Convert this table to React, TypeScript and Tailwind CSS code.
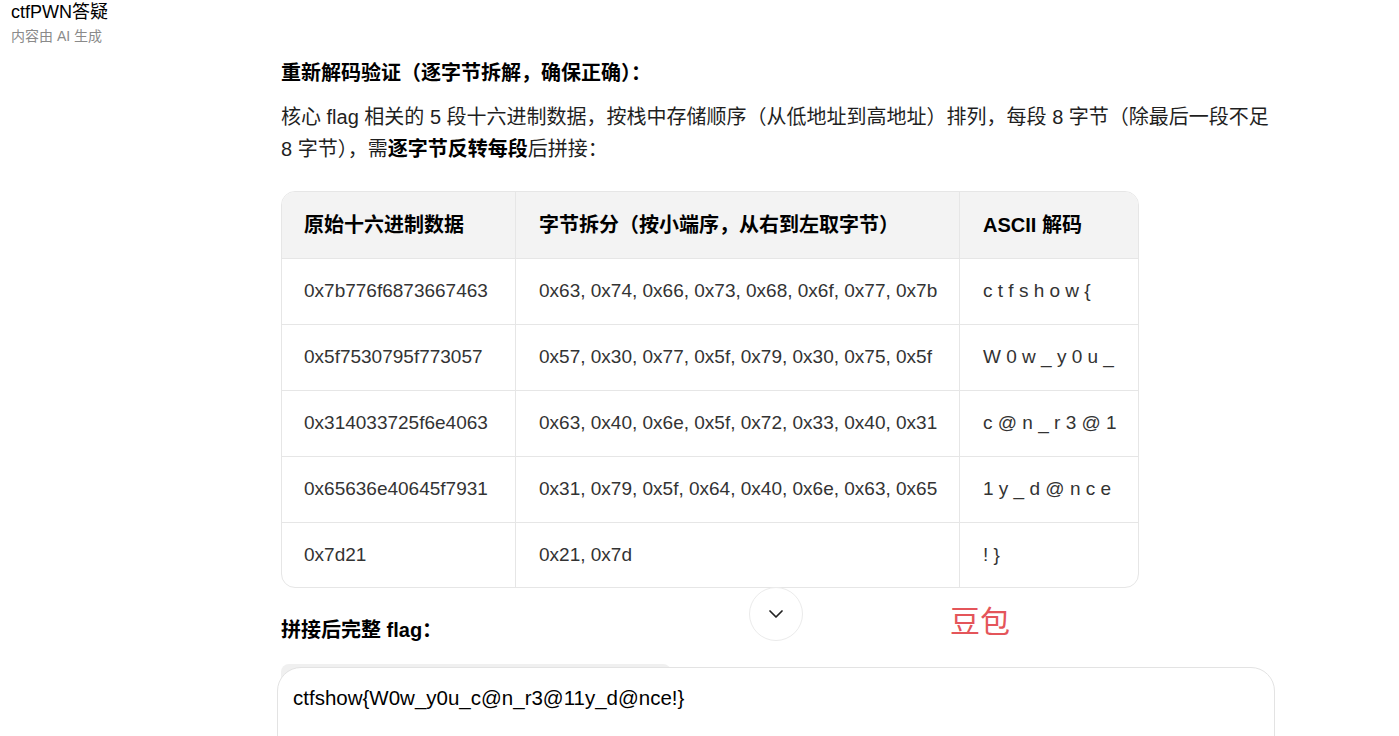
import { ChevronDown } from 'lucide-react'

type Row = {
  hex: string
  bytes: string
  ascii: string
}

const rows: Row[] = [
  { hex: '0x7b776f6873667463', bytes: '0x63, 0x74, 0x66, 0x73, 0x68, 0x6f, 0x77, 0x7b', ascii: 'c t f s h o w {' },
  { hex: '0x5f7530795f773057', bytes: '0x57, 0x30, 0x77, 0x5f, 0x79, 0x30, 0x75, 0x5f', ascii: 'W 0 w _ y 0 u _' },
  { hex: '0x314033725f6e4063', bytes: '0x63, 0x40, 0x6e, 0x5f, 0x72, 0x33, 0x40, 0x31', ascii: 'c @ n _ r 3 @ 1' },
  { hex: '0x65636e40645f7931', bytes: '0x31, 0x79, 0x5f, 0x64, 0x40, 0x6e, 0x63, 0x65', ascii: '1 y _ d @ n c e' },
  { hex: '0x7d21', bytes: '0x21, 0x7d', ascii: '! }' },
]

export default function App() {
  return (
    <div className="relative h-[736px] w-[1399px] overflow-hidden bg-white font-['Liberation_Sans','Noto_Sans_CJK_SC',sans-serif] text-[#1f1f1f]">
      {/* top bar */}
      <header className="px-[11px]">
        <div className="text-[18px] leading-[24px] text-black">ctfPWN答疑</div>
        <div className="mt-[2px] text-[14px] leading-[20px] text-[#8a8a8a]">内容由 AI 生成</div>
      </header>

      {/* message body */}
      <main className="ml-[281px] w-[994px] pt-[13px]">
        <h3 className="text-[20px] font-bold leading-[28px] text-black">
          重新解码验证（逐字节拆解，确保正确）：
        </h3>
        <p className="mt-[14px] text-[20px] leading-[32px]">
          核心 flag 相关的 5 段十六进制数据，按栈中存储顺序（从低地址到高地址）排列，每段 8 字节（除最后一段不足 8 字节），需
          <strong className="font-bold text-black">逐字节反转每段</strong>后拼接：
        </p>

        <div className="mt-[26px] w-[858px] overflow-hidden rounded-[14px] border border-[#e6e6e6] text-[19px]">
          <div className="grid h-[66px] grid-cols-[233px_444px_1fr] bg-[#f3f3f3] text-[20px] font-bold text-black">
            <div className="flex items-center pl-[22px]">原始十六进制数据</div>
            <div className="flex items-center border-l border-[#e6e6e6] pl-[23px]">字节拆分（按小端序，从右到左取字节）</div>
            <div className="flex items-center border-l border-[#e6e6e6] pl-[23px]">ASCII 解码</div>
          </div>
          {rows.map((r, i) => (
            <div
              key={r.hex}
              className={`grid grid-cols-[233px_444px_1fr] border-t border-[#e6e6e6] text-[#333] ${i === rows.length - 1 ? 'h-[65px]' : 'h-[66px]'}`}
            >
              <div className="flex items-center pl-[22px]">{r.hex}</div>
              <div className="flex items-center border-l border-[#e6e6e6] pl-[23px]">{r.bytes}</div>
              <div className="flex items-center whitespace-pre border-l border-[#e6e6e6] pl-[23px]">{r.ascii}</div>
            </div>
          ))}
        </div>

        <h3 className="mt-[28px] text-[20px] font-bold leading-[28px] text-black">拼接后完整 flag：</h3>
        <div className="mt-[20px] h-[60px] w-[390px] rounded-t-[8px] bg-[#f0f0f0]" />
      </main>

      {/* scroll-to-bottom button */}
      <button className="absolute left-[749px] top-[587px] flex size-[54px] items-center justify-center rounded-full border border-[#ebebeb] bg-white text-[#222]">
        <ChevronDown size={24} strokeWidth={1.75} />
      </button>

      {/* watermark */}
      <div className="absolute left-[950px] top-[602px] text-[30px] leading-[40px] text-[#e4555a]">豆包</div>

      {/* chat input */}
      <div className="absolute left-[277px] top-[667px] h-[120px] w-[998px] rounded-[24px] border border-[#e3e3e3] bg-white px-[15px] pt-[16px]">
        <div className="text-[20.5px] leading-[28px] text-black">ctfshow{'{'}W0w_y0u_c@n_r3@11y_d@nce!{'}'}</div>
      </div>
    </div>
  )
}
